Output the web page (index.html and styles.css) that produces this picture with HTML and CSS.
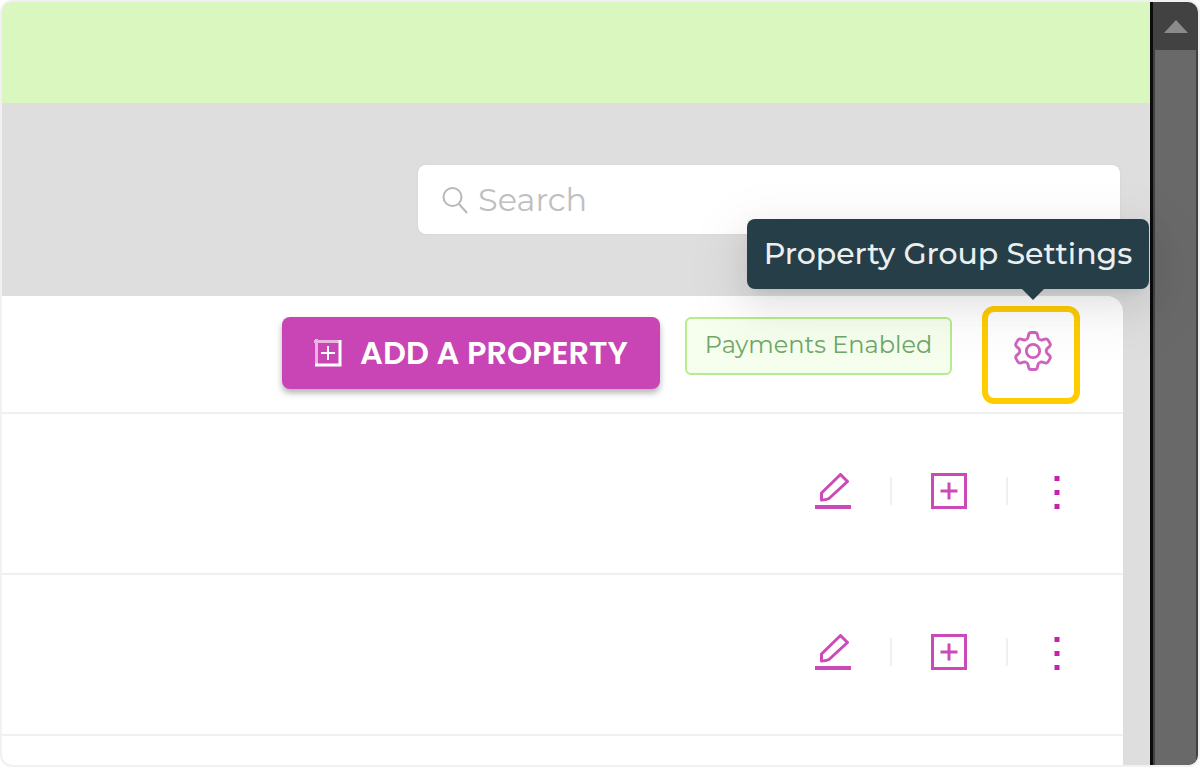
FILE: index.html
```html
<!DOCTYPE html>
<html lang="en">
<head>
  <meta charset="UTF-8" />
  <meta name="viewport" content="width=device-width, initial-scale=1.0" />
  <title>Properties</title>
  <link rel="stylesheet" href="styles.css">
</head>
<body>

  <svg class="sprite" aria-hidden="true">
    <symbol id="icon-edit" viewBox="0 0 36 36">
      <rect x="0" y="32" width="36" height="4" fill="currentColor"/>
      <path d="M6.500 27V20L25.500 1.500L32.500 8.500L14 25.500Q11 27 6.500 27Z" fill="none" stroke="currentColor" stroke-width="3" stroke-linejoin="round"/>
    </symbol>
    <symbol id="icon-plus" viewBox="0 0 36 36">
      <path d="M1.500 1.500H34.500V34.500H1.500ZM18 9.500V26.500M9.500 18H26.500" fill="none" stroke="currentColor" stroke-width="3"/>
    </symbol>
    <symbol id="icon-more" viewBox="0 0 18 36">
      <path d="M7.500 3h5v5h-5zM7.500 17h5v5h-5zM7.500 31h5v5h-5z" fill="currentColor"/>
    </symbol>
    <path id="tooth" d="M17 11.900Q18.400 11.200 18.800 9.500L19.400 6.800Q20 4.500 22 4.500H26Q28 4.500 28.600 6.800L29.200 9.500Q29.600 11.200 31 11.900"/>
  </svg>

  <div class="window">
    <main class="page">
      <div class="banner"></div>

      <div class="toolbar">
        <label class="search">
          <svg class="search-icon" viewBox="0 0 26 28" aria-hidden="true">
            <circle cx="10.500" cy="11" r="9"/>
            <path d="M17 18L25 27"/>
          </svg>
          <input type="search" placeholder="Search" aria-label="Search">
        </label>
      </div>

      <section class="card">
        <div class="card-header">
          <button class="add-btn">
            <svg viewBox="0 0 28 28" aria-hidden="true">
              <path d="M0 2.500H25M2.500 0V27" opacity=".6"/>
              <path d="M26 1V27M1 26H27.500"/>
              <path class="thin" d="M14 7V21M7 14H21"/>
            </svg>
            ADD A PROPERTY
          </button>
          <span class="tag">Payments Enabled</span>
          <button class="settings-btn" aria-label="Property Group Settings">
            <svg viewBox="4 2 40 44" aria-hidden="true">
              <use href="#tooth"/>
              <use href="#tooth" transform="rotate(60 24 24)"/>
              <use href="#tooth" transform="rotate(120 24 24)"/>
              <use href="#tooth" transform="rotate(180 24 24)"/>
              <use href="#tooth" transform="rotate(240 24 24)"/>
              <use href="#tooth" transform="rotate(300 24 24)"/>
              <circle cx="24" cy="24" r="7"/>
            </svg>
            <span class="highlight"></span>
            <span class="tooltip">Property Group Settings</span>
          </button>
        </div>

        <div class="row">
          <button class="icon-btn" aria-label="Edit"><svg><use href="#icon-edit"/></svg></button>
          <span class="divider"></span>
          <button class="icon-btn" aria-label="Add"><svg><use href="#icon-plus"/></svg></button>
          <span class="divider"></span>
          <button class="icon-btn more" aria-label="More"><svg><use href="#icon-more"/></svg></button>
        </div>

        <div class="row">
          <button class="icon-btn" aria-label="Edit"><svg><use href="#icon-edit"/></svg></button>
          <span class="divider"></span>
          <button class="icon-btn" aria-label="Add"><svg><use href="#icon-plus"/></svg></button>
          <span class="divider"></span>
          <button class="icon-btn more" aria-label="More"><svg><use href="#icon-more"/></svg></button>
        </div>
      </section>
    </main>

    <div class="scrollbar">
      <div class="scroll-up"><span class="arrow"></span></div>
      <div class="thumb"></div>
    </div>
  </div>

</body>
</html>
```
FILE: styles.css
```css
* {
  box-sizing: border-box;
}
body {
  margin: 0;
  background-color: #fff;
  font-family: Montserrat, Inter, sans-serif;
}
button {
  font-family: inherit;
  padding: 0;
  border: none;
  background: none;
  cursor: pointer;
}
.sprite {
  position: absolute;
  width: 0;
  height: 0;
}
.window {
  display: flex;
  height: 100vh;
  border: 2px solid #f1f1f5;
  border-radius: 12px;
  overflow: hidden;
}
.page {
  flex: 1;
  display: flex;
  flex-direction: column;
  background-color: #dedede;
}
.banner {
  flex: none;
  height: 101px;
  background-color: #d9f7be;
}
.toolbar {
  display: flex;
  justify-content: flex-end;
  padding: 62px 30px;
}
.search {
  display: flex;
  align-items: center;
  gap: 10px;
  width: 702px;
  height: 69px;
  padding: 0 24px;
  background-color: #fff;
  border-radius: 8px;
  box-shadow: 0 0 2px #ccc;
}
.search-icon {
  width: 26px;
  height: 28px;
  fill: none;
  stroke: #b8b8b8;
  stroke-width: 2;
}
.search input {
  flex: 1;
  border: none;
  outline: none;
  padding: 0;
  background: none;
  font-family: inherit;
  font-size: 32px;
}
.search input::placeholder {
  color: #bfbfbf;
  opacity: 1;
}

/* property list */
.card {
  flex: 1;
  margin-right: 27px;
  background-color: #fff;
  border-top-right-radius: 16px;
}
.card-header {
  display: flex;
  justify-content: flex-end;
  align-items: flex-start;
  height: 118px;
  padding: 21px 71px 0 0;
  border-bottom: 2px solid #f0f0f0;
}
.add-btn {
  display: flex;
  align-items: center;
  justify-content: center;
  gap: 18px;
  width: 378px;
  height: 72px;
  margin-right: 25px;
  color: #fff;
  background-color: #c944b5;
  border-radius: 8px;
  box-shadow: 0 4px 6px rgba(0, 0, 0, 0.3);
  font-family: Poppins, Montserrat, Inter, sans-serif;
  font-size: 32px;
  font-weight: 600;
}
.add-btn svg {
  width: 28px;
  height: 28px;
  fill: none;
  stroke: #fff;
  stroke-width: 3;
}
.add-btn .thin {
  stroke-width: 2;
}
.tag {
  width: 267px;
  height: 58px;
  margin-right: 62px;
  color: #6fa76a;
  background-color: #f6ffed;
  border: 2px solid #b7eb8f;
  border-radius: 6px;
  font-size: 24px;
  line-height: 52px;
  text-align: center;
}
.settings-btn {
  position: relative;
  width: 38px;
  height: 68px;
}
.settings-btn svg {
  display: block;
  width: 38px;
  height: 42px;
  fill: none;
  stroke: #cf62be;
  stroke-width: 3;
}
.highlight {
  position: absolute;
  top: -11px;
  left: -32px;
  width: 98px;
  height: 98px;
  border: 6px solid #fc0;
  border-radius: 12px;
}
.tooltip {
  position: absolute;
  right: -97px;
  bottom: 96px;
  width: 402px;
  height: 70px;
  color: #eceff0;
  background-color: #263e47;
  border-radius: 8px;
  box-shadow: 0 6px 12px -8px rgba(0, 0, 0, 0.12), 0 12px 32px rgba(0, 0, 0, 0.08), 0 18px 56px 16px rgba(0, 0, 0, 0.05);
  font-size: 30px;
  font-weight: 500;
  line-height: 70px;
  text-align: center;
  white-space: nowrap;
}
.tooltip::after {
  content: "";
  position: absolute;
  top: 100%;
  right: 105px;
  border: 11px solid transparent;
  border-top-color: #263e47;
  border-bottom: none;
}
.row {
  display: flex;
  justify-content: flex-end;
  align-items: flex-start;
  gap: 39px;
  height: 161px;
  padding: 59px 58px 0 0;
  border-bottom: 2px solid #f0f0f0;
}
.icon-btn {
  width: 36px;
  height: 36px;
  color: #cb4ab8;
}
.icon-btn.more {
  width: 18px;
  color: #c521ad;
}
.icon-btn svg {
  display: block;
  width: 100%;
  height: 100%;
}
.divider {
  width: 2px;
  height: 28px;
  margin-top: 4px;
  background-color: #f0f0f0;
}

/* scrollbar */
.scrollbar {
  display: flex;
  flex-direction: column;
  width: 48px;
  border-left: 3px solid #0c0c0c;
  background-color: #424242;
}
.scroll-up {
  display: flex;
  align-items: center;
  justify-content: center;
  height: 48px;
}
.arrow {
  border: 12px solid transparent;
  border-bottom: 13px solid #8b8b8b;
  border-top: none;
}
.thumb {
  flex: 1;
  margin: 0 2px;
  background-color: #696969;
}
```
